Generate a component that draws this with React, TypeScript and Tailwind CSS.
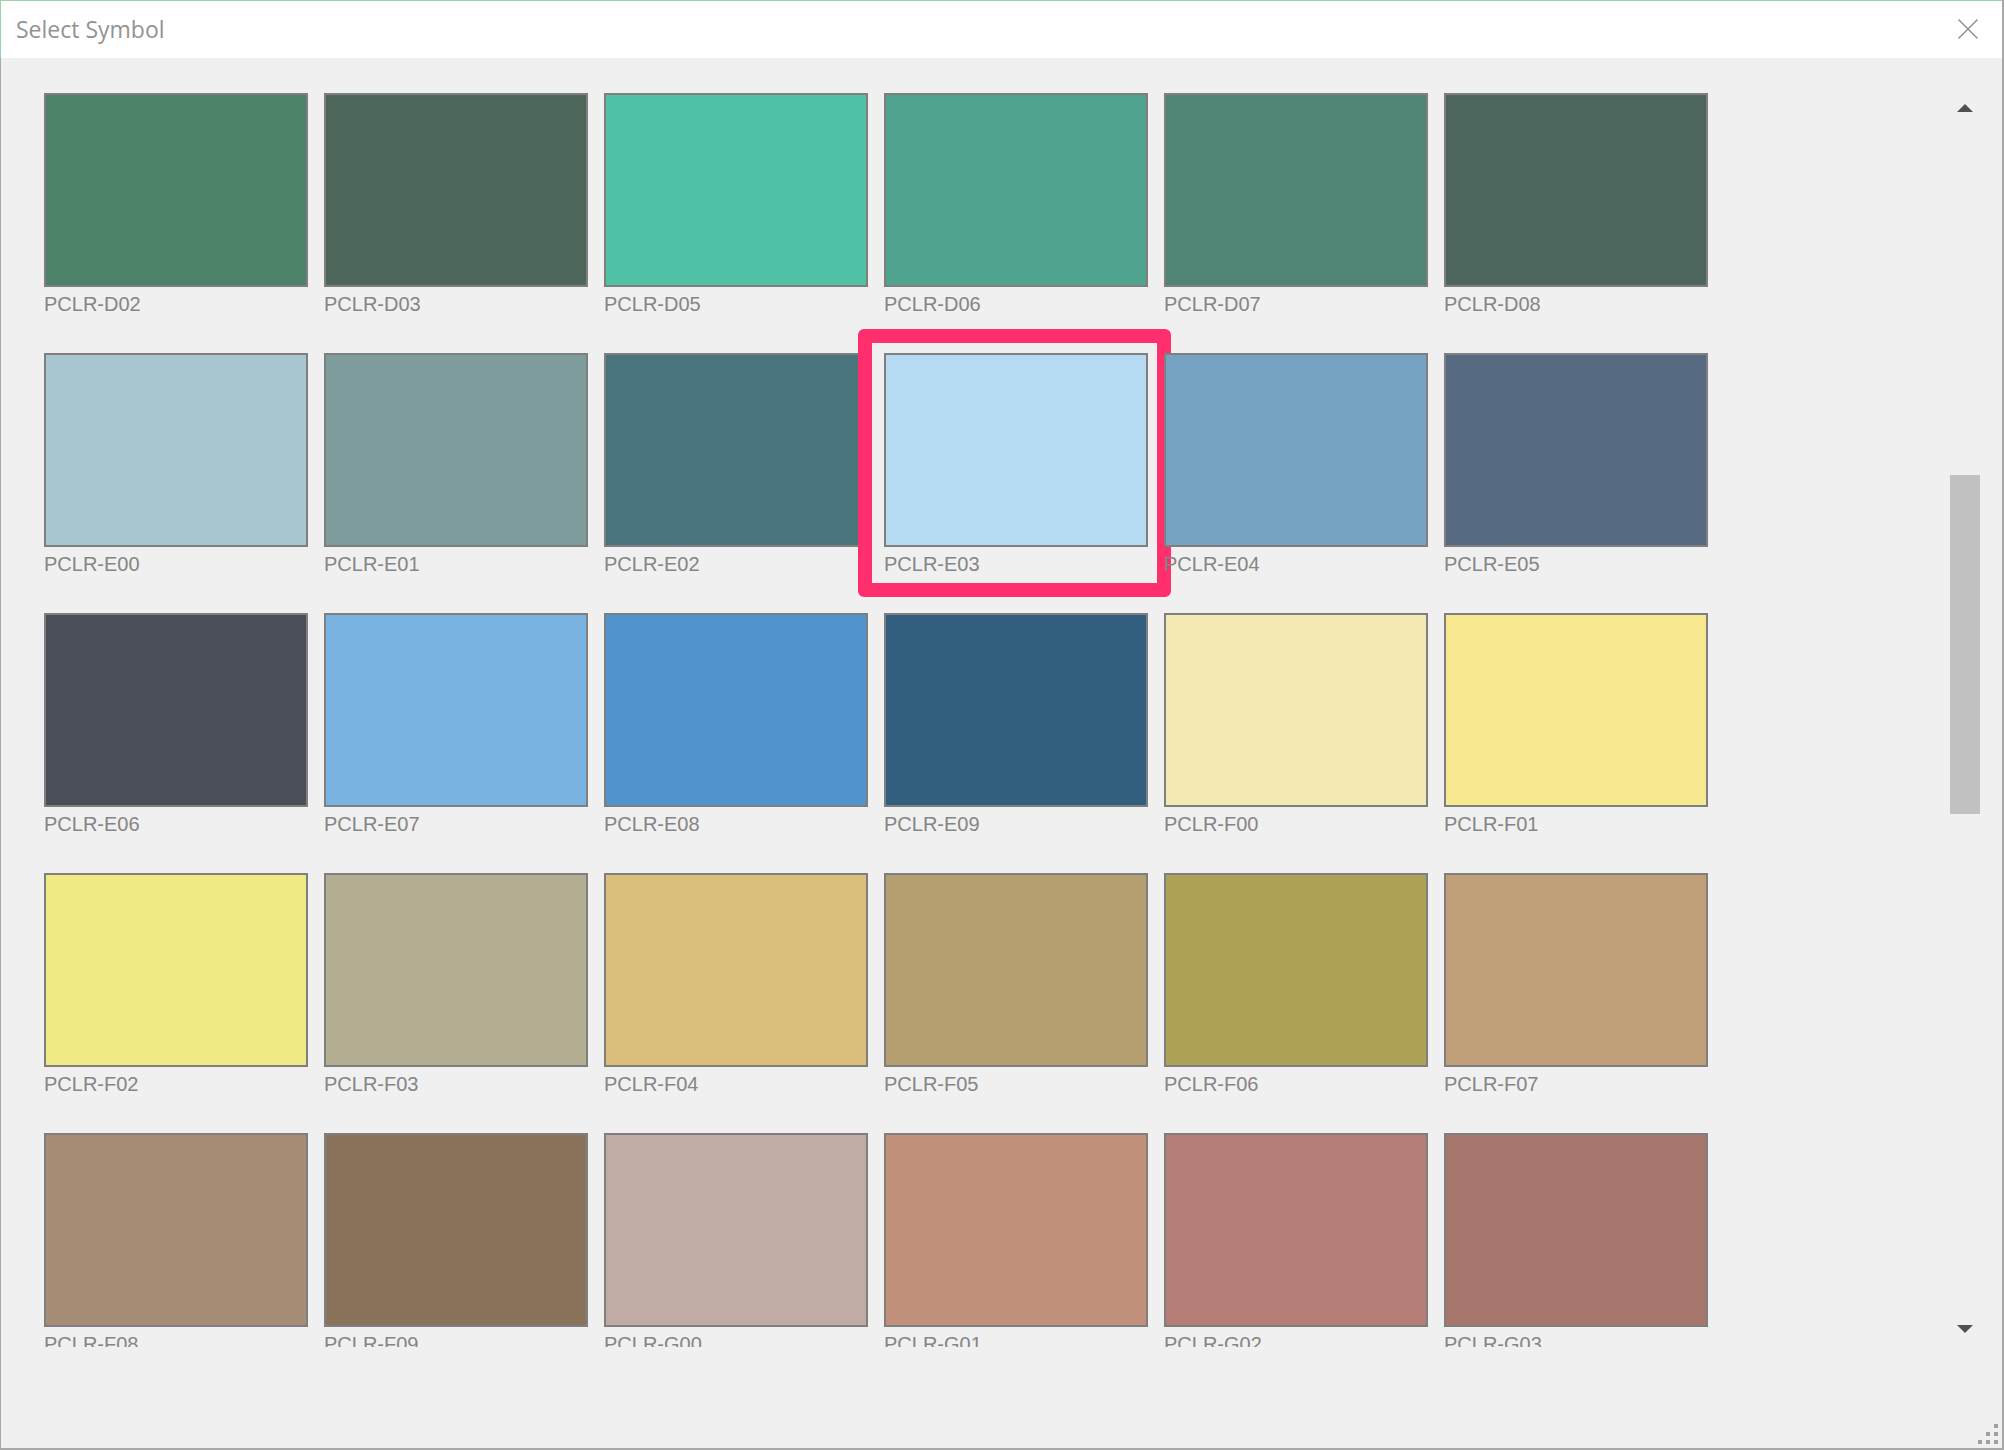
type Swatch = { code: string; color: string };

const SWATCHES: Swatch[] = [
  { code: 'PCLR-D02', color: '#4c8268' },
  { code: 'PCLR-D03', color: '#4c6659' },
  { code: 'PCLR-D05', color: '#4fc2a5' },
  { code: 'PCLR-D06', color: '#4fa38f' },
  { code: 'PCLR-D07', color: '#4f8477' },
  { code: 'PCLR-D08', color: '#4c665e' },
  { code: 'PCLR-E00', color: '#a7c6cf' },
  { code: 'PCLR-E01', color: '#7f9c9d' },
  { code: 'PCLR-E02', color: '#4a747d' },
  { code: 'PCLR-E03', color: '#b5daf2' },
  { code: 'PCLR-E04', color: '#76a3c3' },
  { code: 'PCLR-E05', color: '#566b81' },
  { code: 'PCLR-E06', color: '#4a4e59' },
  { code: 'PCLR-E07', color: '#78b3e2' },
  { code: 'PCLR-E08', color: '#4f94cd' },
  { code: 'PCLR-E09', color: '#325e80' },
  { code: 'PCLR-F00', color: '#f4e9b3' },
  { code: 'PCLR-F01', color: '#f8e88f' },
  { code: 'PCLR-F02', color: '#f0ea84' },
  { code: 'PCLR-F03', color: '#b3ae91' },
  { code: 'PCLR-F04', color: '#d9bf79' },
  { code: 'PCLR-F05', color: '#b59e70' },
  { code: 'PCLR-F06', color: '#ada155' },
  { code: 'PCLR-F07', color: '#bfa078' },
  { code: 'PCLR-F08', color: '#a68b75' },
  { code: 'PCLR-F09', color: '#8b735b' },
  { code: 'PCLR-G00', color: '#c0aca5' },
  { code: 'PCLR-G01', color: '#c0907a' },
  { code: 'PCLR-G02', color: '#b57f77' },
  { code: 'PCLR-G03', color: '#a7766d' },
];

const SELECTED = 'PCLR-E03';

function ScrollArrow({ down }: { down?: boolean }) {
  return (
    <div className="h-[36px] flex items-center justify-center">
      <svg width="16" height="8" viewBox="0 0 16 8">
        <polygon points={down ? '0,0 16,0 8,8' : '8,0 16,8 0,8'} fill="#505050" />
      </svg>
    </div>
  );
}

export default function App() {
  return (
    <div className="w-[2004px] h-[1450px] bg-[#a8a8a8] font-['Liberation_Sans',Arial,sans-serif]">
      <div className="relative w-[2002px] h-[1448px] flex flex-col bg-[#f0f0f0]">
        {/* Title bar */}
        <div className="h-[58px] shrink-0 bg-white border-t border-l border-[#97d3ab] flex items-center justify-between pl-[15px] pr-[24px]">
          <span className="font-['Open_Sans',sans-serif] text-[23px] text-[#939393] leading-none">
            Select Symbol
          </span>
          <svg width="20" height="20" viewBox="0 0 20 20" className="-mt-[1px]">
            <path d="M0.5 0.5 L19.5 19.5 M19.5 0.5 L0.5 19.5" stroke="#8c8c8c" strokeWidth="1.4" fill="none" />
          </svg>
        </div>

        {/* Body */}
        <div className="flex-1 flex border-l border-[#a8a8a8] pt-[32px]">
          <div className="h-[1257px] overflow-hidden pl-[43px] pt-[3px]">
            <div className="grid grid-cols-[repeat(6,264px)] gap-x-[16px] gap-y-[37px]">
              {SWATCHES.map(s => (
                <div key={s.code} className="relative">
                  <div
                    className="h-[194px] border-2 border-[#7f7f7f]"
                    style={{ backgroundColor: s.color }}
                  />
                  <div className="mt-[5px] text-[20px] leading-[24px] text-[#858585]">{s.code}</div>
                  {s.code === SELECTED && (
                    <div className="absolute -left-[26px] -top-[24px] w-[313px] h-[268px] border-[14px] border-[#ff2e6c] rounded-[6px] pointer-events-none" />
                  )}
                </div>
              ))}
            </div>
          </div>

          {/* Scrollbar */}
          <div className="ml-auto mr-[20px] w-[34px] h-[1257px] flex flex-col">
            <ScrollArrow />
            <div className="flex-1 px-[2px] pt-[349px]">
              <div className="h-[339px] bg-[#c1c1c1]" />
            </div>
            <ScrollArrow down />
          </div>
        </div>

        {/* Resize grip */}
        <svg className="absolute right-[4px] bottom-[4px]" width="20" height="20" viewBox="0 0 20 20">
          <rect x="16" y="0" width="4" height="4" fill="#a0a0a0" />
          <rect x="8" y="8" width="4" height="4" fill="#a0a0a0" />
          <rect x="16" y="8" width="4" height="4" fill="#a0a0a0" />
          <rect x="0" y="16" width="4" height="4" fill="#a0a0a0" />
          <rect x="8" y="16" width="4" height="4" fill="#a0a0a0" />
          <rect x="16" y="16" width="4" height="4" fill="#a0a0a0" />
        </svg>
      </div>
    </div>
  );
}
